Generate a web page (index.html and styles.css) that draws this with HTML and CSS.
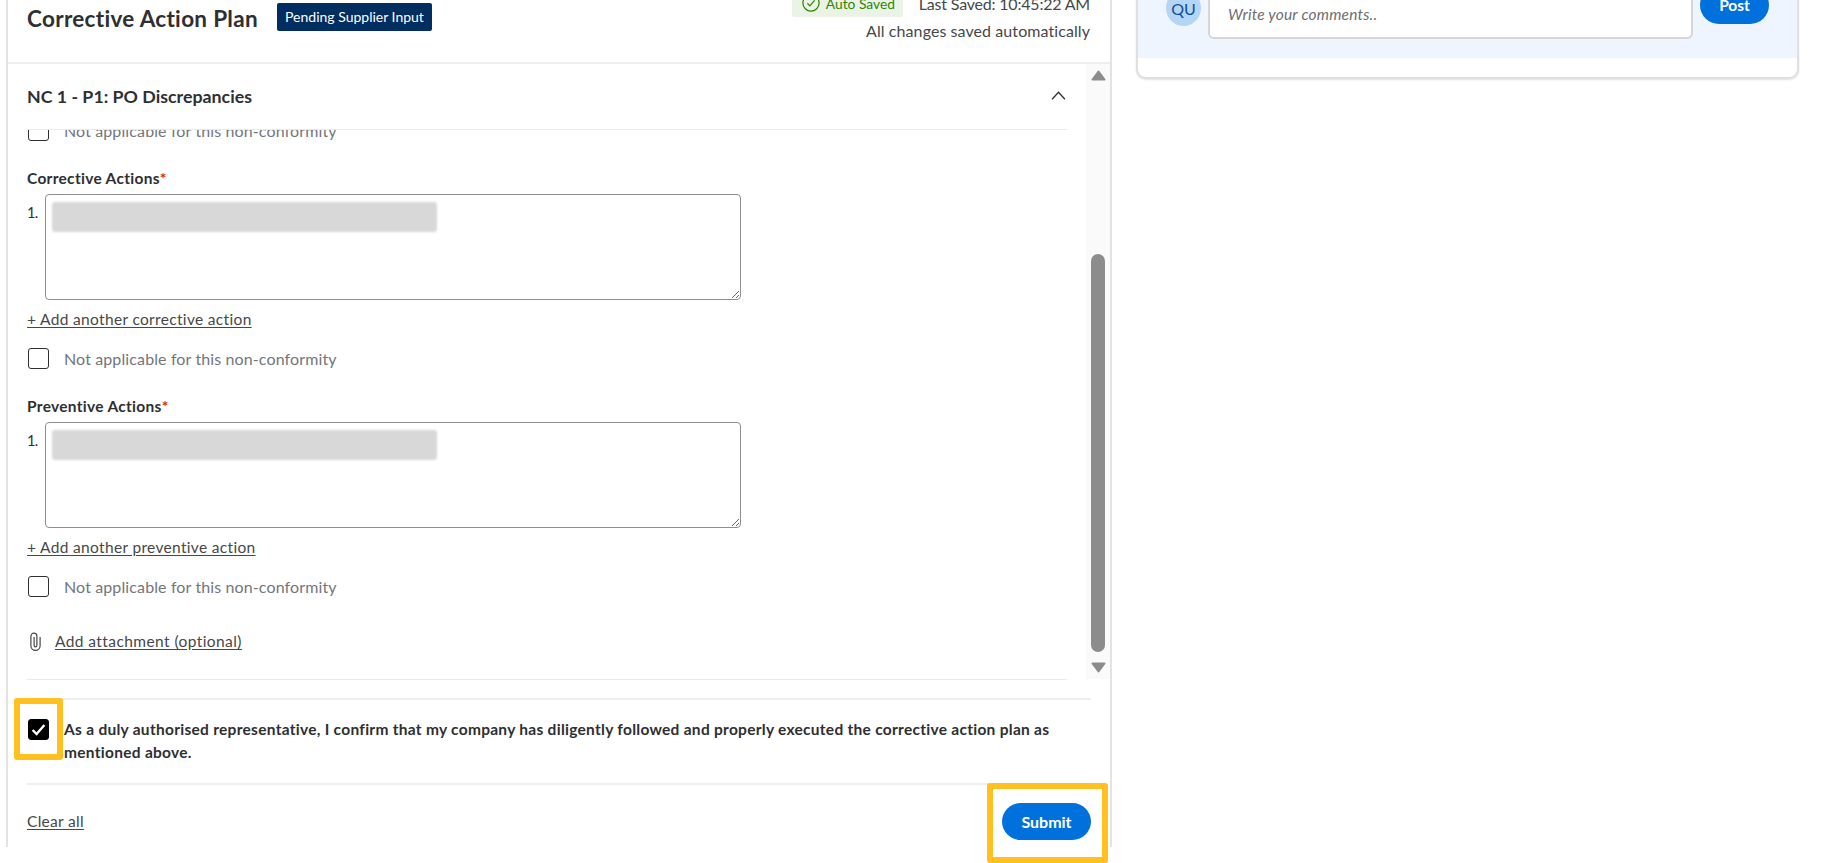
FILE: index.html
```html
<!DOCTYPE html>
<html lang="en">
<head>
<meta charset="utf-8">
<title>Corrective Action Plan</title>
<link rel="stylesheet" href="styles.css">
</head>
<body>
<div class="page">
  <main class="panel">
    <header class="panel-head">
      <div class="title-group">
        <h1 class="title">Corrective Action Plan</h1>
        <span class="status">Pending Supplier Input</span>
      </div>
      <div class="save-info">
        <div class="save-row">
          <span class="auto-saved">
            <svg class="auto-icon" viewBox="0 0 16 16" aria-hidden="true"><circle cx="8" cy="8" r="7.2"/><path d="M4.8 8.2l2.2 2.3 4.2-4.8"/></svg>
            Auto Saved
          </span>
          <span class="last-saved">Last Saved: 10:45:22 AM</span>
        </div>
        <div class="save-note">All changes saved automatically</div>
      </div>
    </header>

    <div class="scroll">
      <div class="content">
        <div class="section-head">
          <h2 class="section-title">NC 1 - P1: PO Discrepancies</h2>
          <svg class="chevron" viewBox="0 0 14 8" aria-hidden="true"><path d="M1 7.5L7 1l6 6.5"/></svg>
        </div>
        <div class="clip">
          <div class="form">
            <label class="na-row na-first"><span class="box"></span><span>Not applicable for this non-conformity</span></label>

            <div class="group">
              <div class="field-label">Corrective Actions<span class="req">*</span></div>
              <div class="numbered">
                <span class="num">1.</span>
                <div class="ta-wrap">
                  <textarea class="ta"></textarea>
                  <div class="redact"></div>
                </div>
              </div>
              <a class="add-link" href="#">+ Add another corrective action</a>
              <label class="na-row"><span class="box"></span><span>Not applicable for this non-conformity</span></label>
            </div>

            <div class="group">
              <div class="field-label">Preventive Actions<span class="req">*</span></div>
              <div class="numbered">
                <span class="num">1.</span>
                <div class="ta-wrap">
                  <textarea class="ta"></textarea>
                  <div class="redact"></div>
                </div>
              </div>
              <a class="add-link" href="#">+ Add another preventive action</a>
              <label class="na-row"><span class="box"></span><span>Not applicable for this non-conformity</span></label>
            </div>

            <div class="attach">
              <svg class="clip-icon" viewBox="0 0 12 19" aria-hidden="true"><path d="M10.6 5v8.8a4.6 4.6 0 0 1-9.2 0V4.2a3 3 0 0 1 6 0v9.2a1.4 1.4 0 0 1-2.8 0V5"/></svg>
              <a class="attach-link" href="#">Add attachment (optional)</a>
            </div>
          </div>
        </div>
      </div>
      <div class="gutter">
        <svg class="arrow" viewBox="0 0 15 11" aria-hidden="true"><path d="M7.5 1.5L13.5 9.5H1.5Z"/></svg>
        <div class="track"><div class="thumb"></div></div>
        <svg class="arrow arrow-down" viewBox="0 0 15 11" aria-hidden="true"><path d="M1.5 1.5H13.5L7.5 9.5Z"/></svg>
      </div>
    </div>

    <div class="confirm">
      <span class="box box-on">
        <svg class="tick" viewBox="0 0 14 12" aria-hidden="true"><path d="M1.5 6.5l3.7 3.7L12.5 1.8"/></svg>
      </span>
      <p class="confirm-text">As a duly authorised representative, I confirm that my company has diligently followed and properly executed the corrective action plan as mentioned above.</p>
    </div>

    <footer class="actions">
      <a class="clear" href="#">Clear all</a>
      <button class="submit" type="button">Submit</button>
    </footer>
  </main>

  <aside class="side">
    <div class="card">
      <div class="composer">
        <div class="avatar">QU</div>
        <div class="comment-input">Write your comments..</div>
        <button class="post" type="button">Post</button>
      </div>
    </div>
  </aside>

  <div class="mark mark-check"></div>
  <div class="mark mark-submit"></div>
</div>
</body>
</html>
```

FILE: styles.css
```css
* { box-sizing: border-box; }
html, body { margin: 0; height: 100%; background: #fff; overflow: hidden; }
body { font-family: "Lato", "Open Sans", sans-serif; color: #2e2f32; font-size: 16px; }

.page { position: relative; display: flex; align-items: flex-start; width: 1822px; height: 863px; overflow: hidden; }

/* Main panel */
.panel {
  display: flex; flex-direction: column; flex: none;
  width: 1106px; height: 877px;
  margin: -30px 0 0 6px;
  border-left: 2px solid #e3e3e3; border-right: 2px solid #e3e3e3;
}
.panel-head {
  flex: none; display: flex; justify-content: space-between; align-items: flex-start;
  height: 94px; padding: 19px 20px 0 19px;
  border-bottom: 2px solid #eeeeee;
}
.title-group { display: flex; align-items: flex-start; gap: 19px; margin-top: 14px; }
.title { margin: 2px 0 0; font-size: 22.5px; line-height: 28px; font-weight: 700; letter-spacing: .31px; }
.status {
  display: block; width: 155px; height: 28px; line-height: 28px; text-align: center;
  background: #002e60; color: #fff; font-size: 14px; border-radius: 2px;
}
.save-info { display: flex; flex-direction: column; align-items: flex-end; gap: 4px; color: #46474a; }
.save-row { display: flex; align-items: center; gap: 16px; height: 28px; }
.auto-saved {
  display: flex; align-items: center; gap: 6px; width: 111px; height: 28px; padding-left: 10px;
  background: #eaf3e6; color: #2a8703; font-size: 13.8px; border-radius: 2px;
}
.auto-icon { width: 18px; height: 18px; fill: none; stroke: #2a8703; stroke-width: 1.1; }
.last-saved { font-size: 16px; letter-spacing: -.2px; }
.save-note { font-size: 16px; line-height: 20px; letter-spacing: .08px; }

/* Scrolling area */
.scroll { flex: none; display: flex; height: 616px; }
.content { flex: 1; display: flex; flex-direction: column; min-width: 0; margin: 0 19px; }
.section-head {
  flex: none; display: flex; justify-content: space-between; align-items: center;
  height: 66px; padding: 0 1px 1px 0; border-bottom: 1px solid #eaeaea;
}
.section-title { margin: 0; font-size: 17.8px; font-weight: 700; }
.chevron { width: 15px; height: 9px; fill: none; stroke: #2e2f32; stroke-width: 1.2; margin-top: -1px; }
.clip { flex: 1; overflow: hidden; border-bottom: 1px solid #eaeaea; }
.form { display: flex; flex-direction: column; margin-top: -10px; }

.na-row { display: flex; align-items: center; gap: 15px; height: 21px; color: #74767c; font-size: 16px; letter-spacing: .12px; }
.group { display: flex; flex-direction: column; margin-top: 27px; }
.field-label { height: 20px; line-height: 20px; font-size: 15.5px; font-weight: 700; letter-spacing: .3px; }
.req { color: #de1c24; }
.numbered { display: flex; gap: 10px; margin-top: 6px; }
.num { width: 8px; flex: none; margin-top: 9px; font-size: 14.5px; line-height: 20px; letter-spacing: -.6px; }
.ta-wrap { position: relative; width: 696px; height: 106px; }
.ta {
  display: block; width: 100%; height: 100%; margin: 0; padding: 8px;
  border: 1.5px solid #8d8e91; border-radius: 4px; background: #fff; resize: vertical; outline: none;
}
.redact {
  position: absolute; left: 7px; top: 8px; width: 385px; height: 30px;
  background: #d8d8d8; border-radius: 3px; filter: blur(1px);
}
.add-link {
  align-self: flex-start; margin: 10px 0 18px; height: 20px; line-height: 19px;
  color: #46474a; font-size: 15.5px; letter-spacing: .33px; text-decoration: underline; text-underline-offset: 2px;
}

.box {
  display: flex; align-items: center; justify-content: center; flex: none;
  width: 21px; height: 21px; background: #fff; border: 1.6px solid #2e2f32; border-radius: 3px;
  margin-left: 1px;
}
.box-on { background: #000; border-color: #000; }
.tick { width: 15px; height: 13px; flex: none; fill: none; stroke: #fff; stroke-width: 2.2; }

.attach { display: flex; align-items: center; gap: 13px; margin-top: 34px; height: 20px; }
.clip-icon { width: 13px; height: 19px; margin-left: 2px; fill: none; stroke: #46474a; stroke-width: 1.2; flex: none; }
.attach-link { color: #46474a; font-size: 15.5px; letter-spacing: .42px; text-decoration: underline; text-underline-offset: 2px; }

.gutter {
  flex: none; width: 24px; display: flex; flex-direction: column; align-items: center;
  padding-top: 6px; background: #fafafa; height: 615px;
}
.arrow { display: block; flex: none; width: 15px; height: 11px; fill: #8c8c8c; stroke: #8c8c8c; stroke-width: 2; stroke-linejoin: round; }
.arrow-down { margin-top: 10px; }
.track { flex: none; height: 571px; width: 14px; display: flex; flex-direction: column; justify-content: flex-end; }
.thumb { height: 398px; background: #8c8c8c; border-radius: 7px; }

/* Confirmation */
.confirm {
  flex: none; display: flex; align-items: flex-start; gap: 15px;
  margin: 18px 19px 0 19px; padding-top: 19px; height: 85px;
  border-top: 2px solid #eeeeee;
}
.confirm-text { margin: -1px 0 0; font-size: 15.5px; line-height: 23px; font-weight: 700; letter-spacing: .28px; }

.actions {
  flex: 1; display: flex; justify-content: space-between; align-items: flex-start;
  margin: 0 19px; padding-top: 18px; border-top: 2px solid #eeeeee;
}
.clear { margin-top: 8px; line-height: 20px; color: #46474a; font-size: 15.5px; text-decoration: underline; text-underline-offset: 2px; letter-spacing: .3px; }
.submit {
  width: 89px; height: 37px; padding: 0; border: 0; border-radius: 19px;
  background: #0071dc; color: #fff; font: 700 16px "Lato", sans-serif;
}

/* Side */
.side { flex: none; width: 663px; margin: -30px 0 0 24px; }
.card {
  height: 109px; background: #fff; border: 2px solid #e0e0e0; border-top: 0; border-radius: 0 0 10px 10px;
  box-shadow: 0 1px 2px rgba(0,0,0,.12);
}
.composer {
  display: flex; align-items: flex-end; height: 88px; padding: 0 0 19px 28px; background: #eef5fe;
}
.avatar {
  flex: none; width: 35px; height: 36px; margin-bottom: -2px; border-radius: 50%;
  display: flex; align-items: center; justify-content: center;
  background: #b5d5f7; color: #0b4f9c; font-size: 16px; position: relative; top: -15px;
}
.comment-input {
  flex: none; width: 485px; height: 69px; margin: 0 7px; padding: 34px 0 0 18px;
  background: #fff; border: 2px solid #d6d6d6; border-top: 0; border-radius: 0 0 6px 6px;
  color: #6d6e71; font-style: italic; font-size: 15.5px; line-height: 20px; letter-spacing: .2px;
}
.post {
  flex: none; width: 69px; height: 38px; padding: 0; border: 0; border-radius: 19px;
  background: #0071dc; color: #fff; font: 700 15.5px "Lato", sans-serif; position: relative; top: -15px;
}

/* Highlight boxes */
.mark { position: absolute; border: 6px solid #ffc020; border-radius: 3px; }
.mark-check { left: 14px; top: 698px; width: 49px; height: 62px; }
.mark-submit { left: 987px; top: 783px; width: 121px; height: 80px; }
```
